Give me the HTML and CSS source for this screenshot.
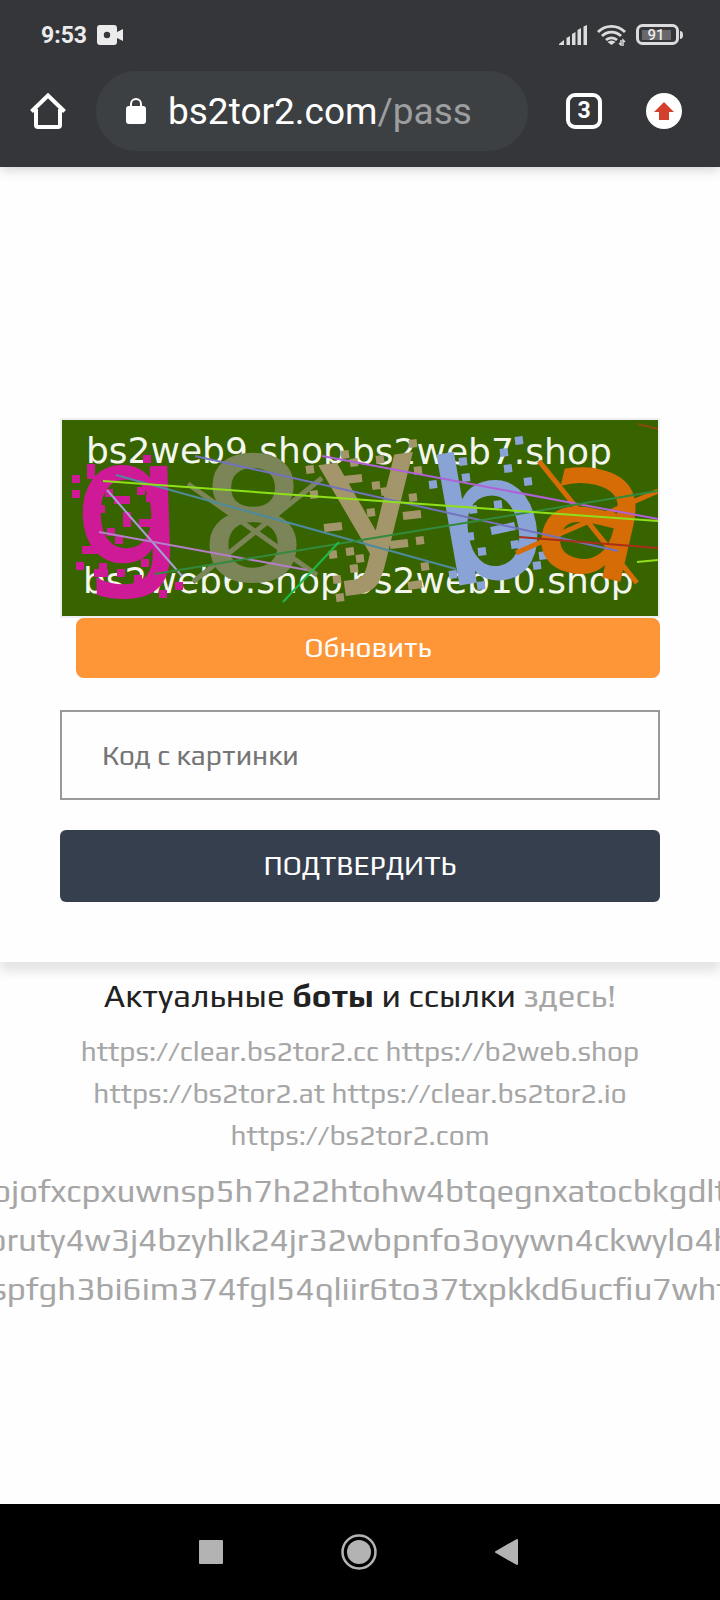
FILE: index.html
```html
<!DOCTYPE html>
<html lang="ru">
<head>
  <meta charset="UTF-8" />
  <meta name="viewport" content="width=device-width, initial-scale=1.0"/>
  <title>bs2tor2.com/pass</title>
  <link rel="stylesheet" href="styles.css">
</head>
<body>
  <header class="browser">
    <div class="status">
      <span class="time">9:53</span>
      <svg class="rec" width="26" height="20" viewBox="0 0 26 20">
        <path fill="#ebebeb" fill-rule="evenodd" d="M3 0h14q3 0 3 3v4l6-3v12l-6-3v4q0 3-3 3H3q-3 0-3-3V3q0-3 3-3zM10 6.800a3.200 3.200 0 1 0 0 6.400a3.200 3.200 0 1 0 0-6.400z"/>
      </svg>
      <div class="status-icons">
        <svg width="28" height="20" viewBox="0 0 28 20" fill="#dcdcdc">
          <path d="M0 19l5-4v5H0zM7.500 13l3.500-2v9H7.500zM13 9l3.500-2v13H13zM18.500 5L22 3v17h-3.500zM24.500 1.500L28 0v20h-3.500z"/>
        </svg>
        <svg width="29" height="22" viewBox="0 0 29 22" fill="none" stroke="#dcdcdc" stroke-width="2.800">
          <path d="M1 8a19 19 0 0 1 27 0M5 12a13.500 13.500 0 0 1 19 0M9 16a8 8 0 0 1 11 0"/>
          <path fill="#dcdcdc" stroke="none" d="M10.500 18q4-3 8 0l-4 3z"/>
          <path stroke-width="1.500" d="M24 16v5l-2-2M26 22v-6l2 2"/>
        </svg>
        <svg width="47" height="22" viewBox="0 0 47 22">
          <rect x="1.500" y="1.500" width="40" height="18" rx="5" fill="none" stroke="#dcdcdc" stroke-width="3"/>
          <rect x="6" y="6" width="29" height="10" fill="#68686a"/>
          <path fill="#dcdcdc" d="M44 7q3 0 3 4t-3 4z"/>
          <text class="battery" x="20" y="16">91</text>
        </svg>
      </div>
    </div>
    <div class="toolbar">
      <button class="icon" aria-label="Home">
        <svg width="36" height="36" viewBox="0 0 36 36" fill="none" stroke="#fff" stroke-width="4">
          <path d="M1.500 18.500L18 2.500l16.500 16M6 16v16q0 2 2 2h20q2 0 2-2V16"/>
        </svg>
      </button>
      <div class="address">
        <svg width="20" height="26" viewBox="0 0 20 26">
          <rect y="8" width="20" height="18" rx="3" fill="#fff"/>
          <path d="M5 9V6a5 5 0 0 1 10 0v3" fill="none" stroke="#fff" stroke-width="2"/>
        </svg>
        <span>bs2tor2.com<span class="path">/pass</span></span>
      </div>
      <button class="icon tabs">3</button>
      <button class="icon update" aria-label="Update">
        <svg width="20" height="18" viewBox="0 0 20 18"><path fill="#d23f2d" d="M10 0l10 10h-5v8H5v-8H0z"/></svg>
      </button>
    </div>
  </header>

  <form class="card">
    <svg class="captcha" viewBox="0 0 596 196">
      <g class="mark">
        <text x="24" y="43">bs2web9.shop</text>
        <text x="290" y="44">bs2web7.shop</text>
        <text x="21" y="173">bs2web6.shop</text>
        <text x="289" y="173">bs2web10.shop</text>
      </g>

      <g class="letter" fill="#cf1a98" stroke="#cf1a98">
        <text x="14" y="144" font-size="172" transform="rotate(-2 14 144)">g</text>
        <path class="dots" d="M10 59h8M10 74h8M25 48h8M25 55h8M81 39h8M75 71h8M84 78h8M52 80h16M35 89h8M61 96h8M61 103h8M77 103h16M45 112h8M53 120h8M20 130h18M14 146h8M79 143h8M37 147h8M32 153h14M55 153h8M72 159h8M40 169h16M97 174h8M113 166h8M43 73h8"/>
      </g>
      <g class="letter" fill="#7b8558" stroke="#7b8558">
        <text x="191" y="160" font-size="170" text-anchor="middle">8</text>
        <path stroke-width="5" d="M126 64L255 155M131 162L260 58"/>
      </g>
      <g class="letter" fill="#a3966a" stroke="#a3966a">
        <text x="266" y="141" font-size="174" transform="rotate(-8 266 141)">y</text>
        <path class="dots" d="M244 50l8-1M279 35l8-1M314 40l8-1M347 24l8-1M352 51l8-1M347 78l8-1M282 60l18-2M310 66l8-1M248 75l8-1M305 93l8-1M341 96l18-2M262 108l18-2M328 125l18-2M354 121l8-1M267 135l8-1M284 132l8-1M294 139l8-1M288 149l8-1M359 147l8-1M271 160l8-1M274 178l8-1M346 166l14-2M319 72l14-2M288 43l8-1"/>
      </g>
      <g class="letter" fill="#8aa3d6" stroke="#8aa3d6">
        <text x="383" y="167" font-size="172" transform="rotate(-10 383 167)">b</text>
        <path class="dots" d="M453 21l8-1M438 33l8-1M442 49l8-1M462 62l8-1M397 42l8-1M400 58l8-1M432 85l8-1M407 90l8-1M449 125l8-1M416 132l8-1M404 117l8-1M429 111l24-5M477 136l8-1M471 146l8-1M415 166l8-1M387 155l8-1M367 65l8-1"/>
      </g>
      <g class="letter" fill="#d56c05" stroke="#d56c05">
        <text x="464" y="139" font-size="184" transform="rotate(13 464 139)">a</text>
        <path stroke-width="5" d="M477 41L575 163M454 133L596 71"/>
      </g>

      <g class="scratch">
        <path stroke="#4f8a9c" d="M54 55L394 149"/>
        <path stroke="#7272bd" d="M133 36L556 131"/>
        <path stroke="#b060d8" d="M260 36L596 99"/>
        <path stroke="#a3a0d2" d="M45 70L120 156"/>
        <path stroke="#b57fc8" d="M37 112L245 150"/>
        <path stroke="#338a3c" d="M93 154L596 71"/>
        <path stroke="#1fb84a" d="M277 122L221 182"/>
        <path stroke="#a83018" d="M457 117L596 128"/>
        <path stroke="#8fe01a" d="M41 61L596 101M575 142L596 140"/>
        <path stroke="#8a4a10" d="M576 4L596 9"/>
      </g>
    </svg>
    <button type="button" class="refresh">Обновить</button>
    <input class="code" type="text" placeholder="Код с картинки" aria-label="Код с картинки">
    <button type="submit" class="submit">Подтвердить</button>
  </form>

  <main class="links">
    <h1>Актуальные <b>боты</b> и ссылки <a href="#">здесь!</a></h1>
    <p>
      <a href="#">https://clear.bs2tor2.cc</a> <a href="#">https://b2web.shop</a><br>
      <a href="#">https://bs2tor2.at</a> <a href="#">https://clear.bs2tor2.io</a><br>
      <a href="#">https://bs2tor2.com</a>
    </p>
    <div class="onion">
      <a href="#">ojofxcpxuwnsp5h7h22htohw4btqegnxatocbkgdlt</a>
      <a href="#">oruty4w3j4bzyhlk24jr32wbpnfo3oyywn4ckwylo4h</a>
      <a href="#">spfgh3bi6im374fgl54qliir6to37txpkkd6ucfiu7whf</a>
    </div>
  </main>

  <nav class="navbar">
    <button aria-label="Recent">
      <svg width="36" height="36" viewBox="0 0 36 36"><rect x="6" y="6" width="24" height="24" rx="1" fill="#b3b3b3"/></svg>
    </button>
    <button aria-label="Home">
      <svg width="36" height="36" viewBox="0 0 36 36"><circle cx="18" cy="18" r="12" fill="#b3b3b3"/><circle cx="18" cy="18" r="16.500" fill="none" stroke="#b3b3b3" stroke-width="2.500"/></svg>
    </button>
    <button aria-label="Back">
      <svg width="36" height="36" viewBox="0 0 36 36"><path fill="#b3b3b3" stroke="#b3b3b3" stroke-width="2" stroke-linejoin="round" d="M28 6v24L7 18z"/></svg>
    </button>
  </nav>
</body>
</html>
```
FILE: styles.css
```css
* {
  box-sizing: border-box;
}

body {
  margin: 0;
  min-height: 100vh;
  display: flex;
  flex-direction: column;
  background: #fefefe;
  color: #222;
  font-family: Play, 'Noto Sans', sans-serif;
  overflow-x: hidden;
}

button {
  border: none;
  padding: 0;
  background: none;
  font-family: inherit;
  cursor: pointer;
}

svg {
  display: block;
}

a {
  color: #a6a6a6;
  text-decoration: none;
}

/* browser */
.browser {
  position: relative;
  z-index: 1;
  height: 167px;
  background: #35363a;
  color: #fff;
  font-family: Roboto, sans-serif;
  box-shadow: 0 2px 12px rgba(0, 0, 0, 0.2);
}

.status {
  display: flex;
  align-items: center;
  height: 70px;
  padding: 0 37px 0 41px;
}

.time {
  font-size: 23px;
  font-weight: 700;
  color: #ebebeb;
  margin-right: 10px;
}

.status-icons {
  display: flex;
  align-items: center;
  gap: 10px;
  margin-left: auto;
}

.battery {
  fill: #ebebeb;
  font-size: 15px;
  font-weight: 500;
  text-anchor: middle;
}

.toolbar {
  display: flex;
  align-items: center;
  height: 82px;
  padding: 0 38px 0 30px;
}

.icon {
  flex: none;
  width: 36px;
  height: 36px;
}

.address {
  flex: 1;
  display: flex;
  align-items: center;
  gap: 22px;
  height: 80px;
  margin: 0 38px 0 30px;
  padding-left: 30px;
  border-radius: 40px;
  background: #3d4043;
  font-size: 37px;
  white-space: nowrap;
}

.path {
  color: #9c9ea0;
}

.tabs {
  margin-right: 44px;
  border: 4px solid #fff;
  border-radius: 9px;
  color: #fff;
  font-size: 23px;
  font-weight: 700;
  line-height: 28px;
}

.update {
  display: flex;
  align-items: center;
  justify-content: center;
  border-radius: 50%;
  background: #fff;
}

/* captcha form */
.card {
  display: flex;
  flex-direction: column;
  padding: 251px 60px 60px;
  background: #fefefe;
  box-shadow: 0 10px 10px rgba(0, 0, 0, 0.1);
}

.captcha {
  width: 100%;
  border: 2px solid #efefef;
  background: #386400;
}

.mark {
  fill: #f3f6ee;
  font-family: 'DejaVu Sans', sans-serif;
  font-size: 36px;
}

.letter {
  font-family: 'DejaVu Sans', sans-serif;
  stroke-width: 2;
}

.dots {
  stroke-width: 8;
}

.scratch {
  fill: none;
  stroke-width: 2;
}

.refresh,
.code,
.submit {
  padding-bottom: 2px;
  font-family: inherit;
  font-size: 28px;
}

.refresh {
  height: 60px;
  margin: 0 0 32px 16px;
  border-radius: 8px;
  background: #fe9638;
  color: #fff;
}

.code {
  height: 90px;
  margin-bottom: 30px;
  padding-left: 40px;
  padding-right: 40px;
  border: 2px solid #999;
  border-radius: 0;
  background: #fefefe;
}

.code::placeholder {
  color: #757575;
}

.submit {
  height: 72px;
  border-radius: 6px;
  background: #363f4e;
  color: #fff;
  text-transform: uppercase;
}

/* mirrors */
.links {
  flex: 1;
  padding-top: 9px;
  text-align: center;
}

.links h1 {
  margin: 0 0 10px;
  font-size: 33px;
  font-weight: 400;
  line-height: 49px;
}

.links p {
  margin: 0 0 10px;
  font-size: 28px;
  line-height: 42px;
}

.onion {
  display: flex;
  flex-direction: column;
  align-items: center;
  overflow: hidden;
  font-size: 33px;
  line-height: 49px;
  white-space: nowrap;
}

.navbar {
  display: flex;
  justify-content: center;
  align-items: center;
  gap: 112px;
  height: 96px;
  padding-right: 2px;
  background: #000;
}
```
